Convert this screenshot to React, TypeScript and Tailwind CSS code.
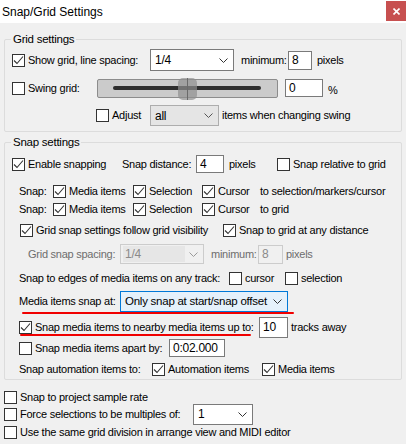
import React from 'react'

interface CheckProps {
  checked?: boolean
  label?: string
  className?: string
}

function Check({ checked, label, className = '' }: CheckProps) {
  return (
    <div className={`flex items-center shrink-0 ${className}`}>
      <span className="w-[13px] h-[13px] border border-[#333333] bg-white flex items-center justify-center shrink-0">
        {checked && (
          <svg width="11" height="11" viewBox="0 0 11 11">
            <path d="M1 5.5 L4 8.5 L10 1.5" stroke="#333333" strokeWidth="1.1" fill="none" />
          </svg>
        )}
      </span>
      {label && <span className="ml-[3px] whitespace-nowrap">{label}</span>}
    </div>
  )
}

function Chevron({ color = '#333333' }: { color?: string }) {
  return (
    <svg width="9" height="5" viewBox="0 0 9 5" className="shrink-0">
      <path d="M0.5 0.5 L4.5 4.5 L8.5 0.5" stroke={color} strokeWidth="1" fill="none" />
    </svg>
  )
}

interface ComboProps {
  value: string
  className: string
  textClass?: string
  chevron?: string
}

function Combo({ value, className, textClass = '', chevron }: ComboProps) {
  return (
    <div className={`flex items-center justify-between shrink-0 border pl-[4px] pr-[5px] ${className}`}>
      <span className={`whitespace-nowrap ${textClass}`}>{value}</span>
      <Chevron color={chevron} />
    </div>
  )
}

function Field({ value, className }: { value: string; className: string }) {
  return (
    <div className={`flex items-center shrink-0 border bg-white pl-[3px] ${className}`}>
      <span className="whitespace-nowrap text-[12px]">{value}</span>
    </div>
  )
}

function Group({ title, className, children }: { title: string; className: string; children: React.ReactNode }) {
  return (
    <div className={`relative mx-[4px] border border-[#dcdcdc] rounded-[2px] ${className}`}>
      <span className="absolute left-[6px] -top-[8px] px-[2px] bg-[#f0f0f0] leading-[14px] text-[11.5px]">{title}</span>
      {children}
    </div>
  )
}

export default function App() {
  return (
    <div className="w-[406px] h-[444px] overflow-hidden bg-[#f0f0f0] text-black text-[11px] leading-[13px] tracking-[-0.25px] font-['Liberation_Sans',Arial,sans-serif]">
      {/* title bar */}
      <div className="h-[23px] bg-white flex items-start justify-between">
        <span className="ml-[2px] mt-[5px] text-[12px] leading-[14px] tracking-normal">Snap/Grid Settings</span>
        <div className="w-[20px] h-[20px] mt-[1px] bg-[#c75050] flex items-center justify-center">
          <svg width="7" height="7" viewBox="0 0 7 7">
            <path d="M0.5 0.5 L6.5 6.5 M6.5 0.5 L0.5 6.5" stroke="white" strokeWidth="1.6" />
          </svg>
        </div>
      </div>

      <Group title="Grid settings" className="mt-[16px] h-[93px]">
        {/* show grid */}
        <div className="flex items-center h-[22px] mt-[9px] pl-[7px]">
          <Check checked label="Show grid, line spacing:" className="w-[138px]" />
          <Combo value="1/4" className="w-[84px] h-[22px] bg-white border-[#7a7a7a]" textClass="text-[12px]" />
          <span className="ml-[7px] w-[47px] whitespace-nowrap">minimum:</span>
          <Field value="8" className="w-[24px] h-[19px] border-[#7a7a7a]" />
          <span className="ml-[5px]">pixels</span>
        </div>

        {/* swing */}
        <div className="flex items-center h-[20px] mt-[7px] pl-[7px]">
          <Check label="Swing grid:" className="w-[85px]" />
          <div className="relative w-[181px] h-[19px] shrink-0 border border-[#8c8c8c] rounded-[2px] bg-[#cbcbcb] flex items-center">
            <div className="ml-[15px] w-[148px] h-[4px] rounded-[2px] bg-[#2e2e2e]" />
            <div className="absolute left-[80px] -top-[2px] w-[19px] h-[22px] rounded-[5px] bg-[#8f8f8f]/70 flex justify-center">
              <div className="w-[1px] h-full bg-[#6a6a6a]" />
            </div>
          </div>
          <Field value="0" className="ml-[7px] w-[38px] h-[18px] border-[#7a7a7a]" />
          <span className="ml-[5px] mt-[5px]">%</span>
        </div>

        {/* adjust */}
        <div className="flex items-center h-[21px] mt-[7px] pl-[91px]">
          <Check label="Adjust" className="w-[54px]" />
          <Combo value="all" className="w-[69px] h-[21px] bg-[#e5e5e5] border-[#adadad]" textClass="text-[12px] mt-[2px]" chevron="#555555" />
          <span className="ml-[3px] whitespace-nowrap">items when changing swing</span>
        </div>
      </Group>

      <Group title="Snap settings" className="mt-[10px] h-[238px]">
        {/* enable */}
        <div className="flex items-center h-[18px] mt-[12px] pl-[7px]">
          <Check checked label="Enable snapping" className="w-[110px]" />
          <span className="w-[74px] whitespace-nowrap">Snap distance:</span>
          <Field value="4" className="w-[28px] h-[18px] border-[#7a7a7a]" />
          <span className="ml-[5px] w-[48px]">pixels</span>
          <Check label="Snap relative to grid" />
        </div>

        {/* snap rows */}
        <div className="flex items-center h-[14px] mt-[11px] pl-[14px]">
          <span className="w-[34px]">Snap:</span>
          <Check checked label="Media items" className="w-[80px]" />
          <Check checked label="Selection" className="w-[69px]" />
          <Check checked label="Cursor" className="w-[58px]" />
          <span className="whitespace-nowrap">to selection/markers/cursor</span>
        </div>
        <div className="flex items-center h-[14px] mt-[4px] pl-[14px]">
          <span className="w-[34px]">Snap:</span>
          <Check checked label="Media items" className="w-[80px]" />
          <Check checked label="Selection" className="w-[69px]" />
          <Check checked label="Cursor" className="w-[58px]" />
          <span className="whitespace-nowrap">to grid</span>
        </div>

        {/* grid follow */}
        <div className="flex items-center h-[14px] mt-[7px] pl-[15px]">
          <Check checked label="Grid snap settings follow grid visibility" className="w-[203px]" />
          <Check checked label="Snap to grid at any distance" />
        </div>

        {/* grid snap spacing (disabled) */}
        <div className="flex items-center h-[20px] mt-[7px] pl-[23px] text-[#6d6d6d]">
          <span className="w-[92px] whitespace-nowrap">Grid snap spacing:</span>
          <div className="w-[84px] h-[20px] shrink-0 border border-[#cccccc] flex items-center justify-between pr-[5px]">
            <div className="ml-[2px] w-[62px] h-[16px] bg-[#e6e6e6] flex items-center pl-[2px] text-[12px] text-[#8a8a8a]">1/4</div>
            <Chevron color="#9a9a9a" />
          </div>
          <span className="ml-[7px] w-[47px] whitespace-nowrap">minimum:</span>
          <div className="w-[25px] h-[19px] shrink-0 border border-[#cccccc] flex items-center pl-[3px] text-[12px] text-[#8a8a8a]">8</div>
          <span className="ml-[3px]">pixels</span>
        </div>

        {/* edges */}
        <div className="flex items-center h-[14px] mt-[7px] pl-[14px]">
          <span className="w-[210px] whitespace-nowrap">Snap to edges of media items on any track:</span>
          <Check label="cursor" className="w-[56px]" />
          <Check label="selection" />
        </div>

        {/* media items snap at */}
        <div className="relative flex items-center h-[21px] mt-[6px] pl-[14px]">
          <span className="w-[101px] whitespace-nowrap">Media items snap at:</span>
          <Combo value="Only snap at start/snap offset" className="w-[168px] h-[21px] bg-[#e5f1fb] border-[#0078d7]" textClass="text-[11.5px]" />
          <div className="absolute left-[17px] top-[21px] w-[272px] h-[2px] rounded-full bg-[#f00000]" />
        </div>

        {/* nearby */}
        <div className="relative flex items-center h-[21px] mt-[5px] pl-[14px]">
          <Check checked label="Snap media items to nearby media items up to:" className="w-[240px]" />
          <Field value="10" className="w-[29px] h-[21px] border-[#7a7a7a]" />
          <span className="ml-[3px] whitespace-nowrap">tracks away</span>
          <div className="absolute left-[15px] top-[17px] w-[231px] h-[2px] rounded-full bg-[#f00000]" />
        </div>

        {/* apart by */}
        <div className="flex items-center h-[18px] mt-[1px] pl-[14px]">
          <Check label="Snap media items apart by:" className="w-[150px]" />
          <Field value="0:02.000" className="w-[56px] h-[18px] border-[#7a7a7a]" />
        </div>

        {/* automation */}
        <div className="flex items-center h-[14px] mt-[5px] pl-[14px]">
          <span className="w-[133px] whitespace-nowrap">Snap automation items to:</span>
          <Check checked label="Automation items" className="w-[110px]" />
          <Check checked label="Media items" />
        </div>
      </Group>

      {/* bottom options */}
      <div className="flex items-center h-[14px] mt-[10px] pl-[4px]">
        <Check label="Snap to project sample rate" />
      </div>
      <div className="flex items-center h-[21px] mt-[0px] pl-[4px]">
        <Check label="Force selections to be multiples of:" className="w-[189px]" />
        <Combo value="1" className="w-[60px] h-[21px] bg-white border-[#7a7a7a]" textClass="text-[12px]" />
      </div>
      <div className="flex items-center h-[14px] mt-[0px] pl-[4px]">
        <Check label="Use the same grid division in arrange view and MIDI editor" />
      </div>
    </div>
  )
}
